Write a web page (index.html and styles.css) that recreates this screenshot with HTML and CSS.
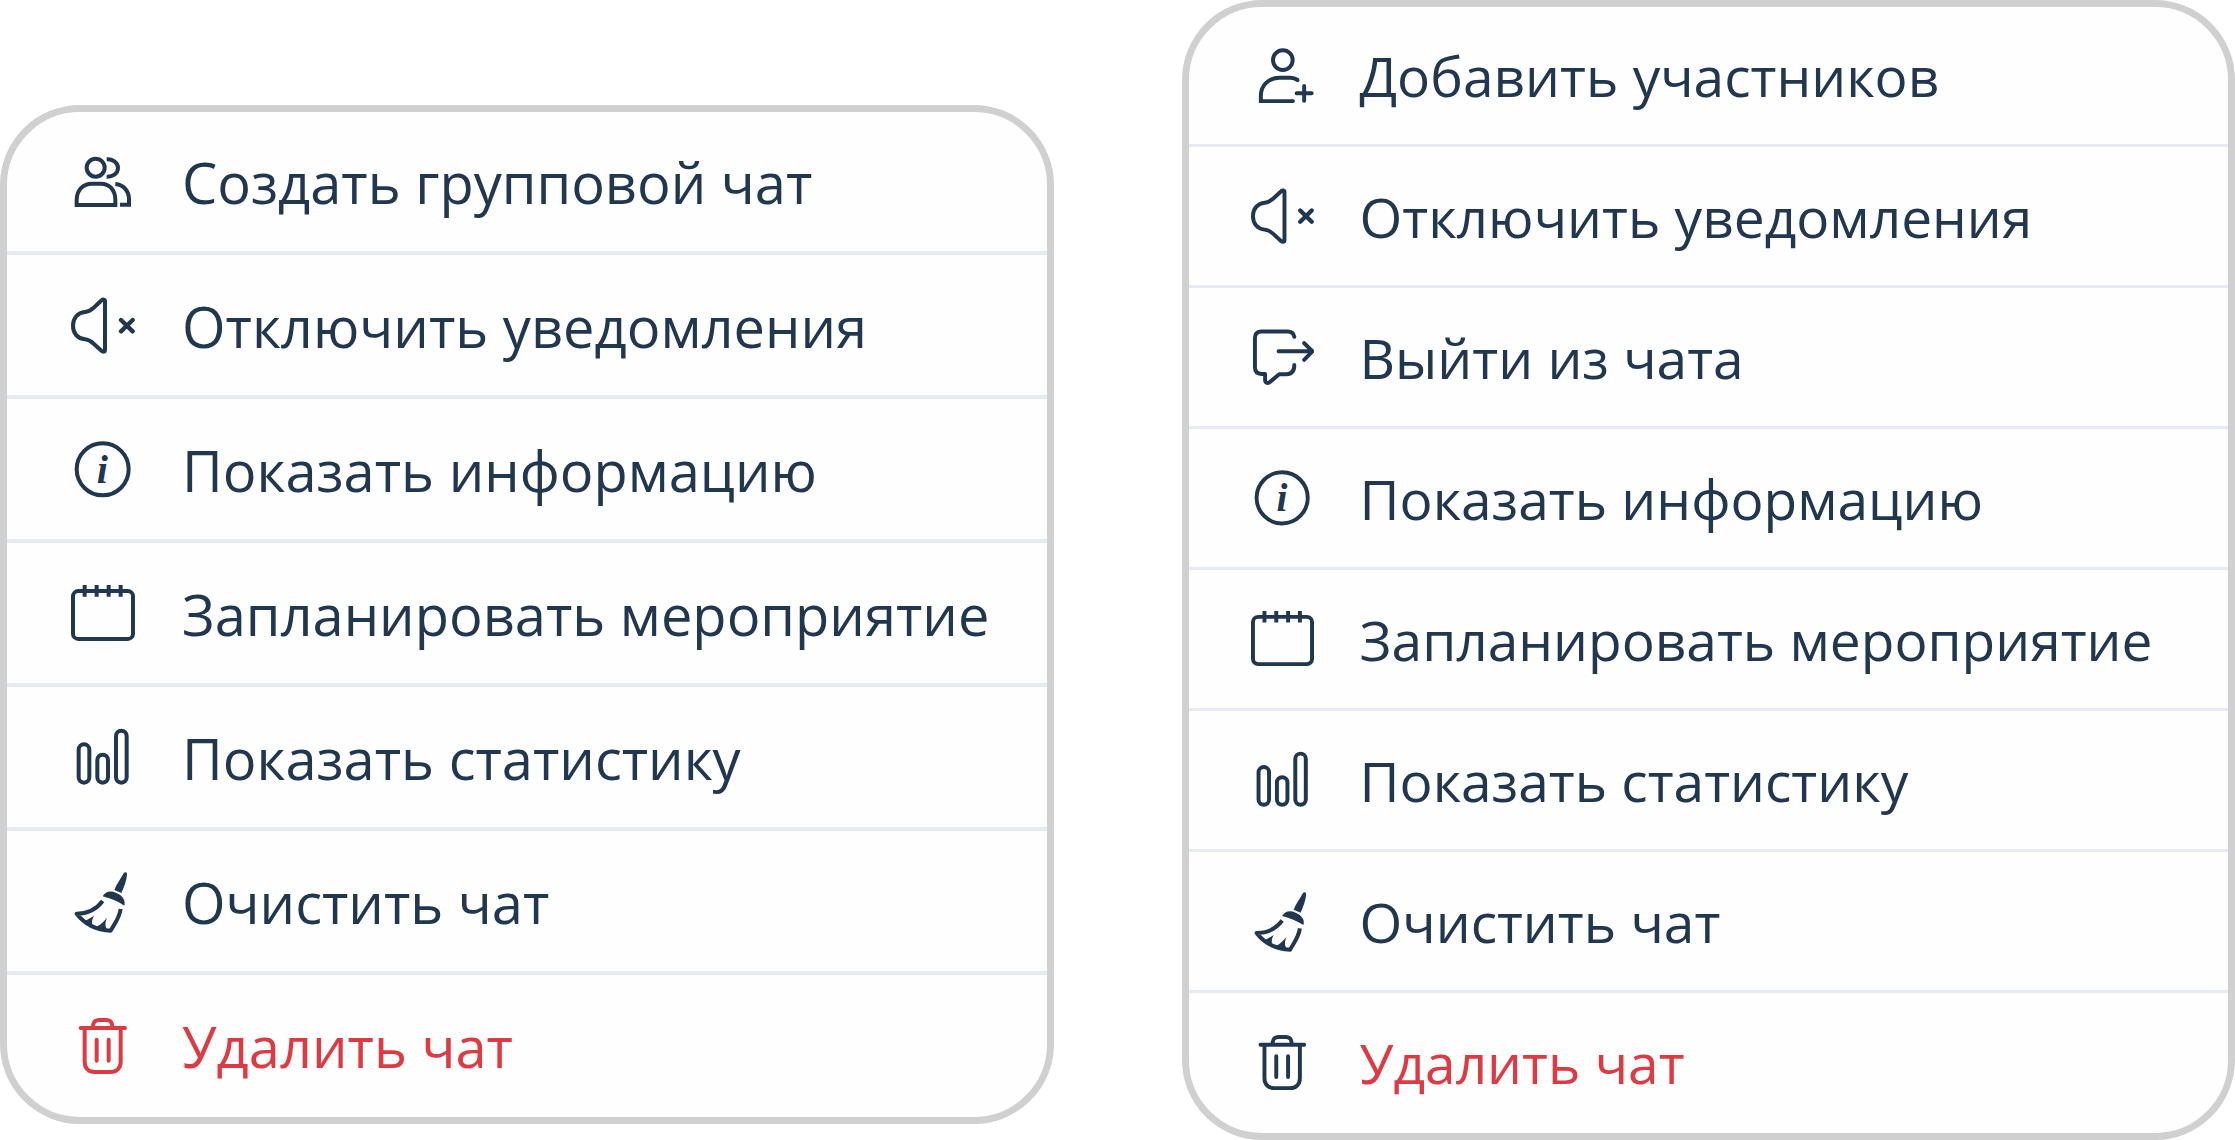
FILE: index.html
```html
<!DOCTYPE html>
<html lang="ru">
<head>
<meta charset="utf-8">
<meta name="viewport" content="width=device-width, initial-scale=1">
<title>Меню чата</title>
<link rel="stylesheet" href="styles.css">
</head>
<body>
<svg class="sprite" aria-hidden="true">
  <symbol id="i-group" viewBox="0 0 192 192">
    <circle cx="74" cy="53" r="27"/>
    <path d="M107 28C124 27 141 37 141 54S124 81 107 80"/>
    <path d="M17 165V150C17 118 38 101 62 101H90C114 101 133 118 133 150V165Z"/>
    <path d="M133 102C158 104 174 124 174 148V164H147"/>
  </symbol>
  <symbol id="i-mute" viewBox="0 0 192 192">
    <path d="M102 22V168C102 174 96 174 92 171L68 149C60 142 54 137 42 136C20 134 6 118 6 95C6 72 20 56 42 54C54 53 60 48 68 41L92 19C96 15 102 16 102 22Z"/>
    <path stroke-linecap="round" stroke-width="13" d="M150 78L185 112M185 78L150 112"/>
  </symbol>
  <symbol id="i-info" viewBox="0 0 192 192">
    <circle cx="95" cy="94" r="78"/>
    <text class="info-letter" x="94" y="135" text-anchor="middle">i</text>
  </symbol>
  <symbol id="i-calendar" viewBox="0 0 192 192">
    <rect x="6" y="27" width="180" height="144" rx="16"/>
    <path d="M41 9V44M77 9V44M113 9V44M149 9V44"/>
  </symbol>
  <symbol id="i-stats" viewBox="0 0 192 192">
    <rect x="23" y="55" width="32" height="115" rx="16"/>
    <rect x="79" y="86" width="32" height="84" rx="16"/>
    <rect x="135" y="14" width="32" height="156" rx="16"/>
  </symbol>
  <symbol id="i-broom" viewBox="0 0 192 192">
    <path class="solid" d="M158 10C161 5 169 6 168 13C167 31 160 50 151 69L130 60C138 40 149 27 158 10Z"/>
    <path class="solid" d="M95 79C103 64 119 61 136 69C153 76 165 89 160 107C140 94 119 85 95 79Z"/>
    <path d="M95 93C78 116 50 131 17 131C40 161 76 180 119 182C129 163 145 146 149 117" stroke-linejoin="round"/>
    <path class="solid" d="M42 153L70 137C65 144 62 150 64 164ZM76 170C90 164 98 154 108 143C103 157 101 166 108 178Z"/>
  </symbol>
  <symbol id="i-trash" viewBox="0 0 192 192">
    <path d="M41 44V143C41 163 53 174 72 174H118C137 174 149 163 149 143V44M66 42C65 26 71 18 85 18H105C119 18 125 26 124 42"/>
    <path stroke-linecap="round" d="M29 42H162M77 77V140M113 77V140"/>
  </symbol>
  <symbol id="i-add-user" viewBox="0 0 192 192">
    <circle cx="97" cy="49" r="30"/>
    <path d="M128 174H30V158C30 124 56 103 86 103H120C130 103 137 106 142 110"/>
    <path stroke-linecap="round" d="M128 174H127M141 109L142 110M162 128V173M139 150H185"/>
  </symbol>
  <symbol id="i-leave" viewBox="0 0 192 192">
    <path stroke-linecap="round" stroke-linejoin="round" d="M132 33C130 22 124 17 112 17H32Q12 17 12 37V126Q12 146 32 146H43V164C43 174 50 176 57 171L86 147H108Q132 147 132 119"/>
    <path stroke-linecap="round" stroke-linejoin="round" d="M84 77H186M162 52L187 77L162 103"/>
  </symbol>
</svg>

<main class="menus">
  <ul class="menu menu-personal">
    <li><button type="button" class="item"><svg class="icon" aria-hidden="true"><use href="#i-group"/></svg>Создать групповой чат</button></li>
    <li><button type="button" class="item"><svg class="icon" aria-hidden="true"><use href="#i-mute"/></svg>Отключить уведомления</button></li>
    <li><button type="button" class="item"><svg class="icon" aria-hidden="true"><use href="#i-info"/></svg>Показать информацию</button></li>
    <li><button type="button" class="item"><svg class="icon" aria-hidden="true"><use href="#i-calendar"/></svg>Запланировать мероприятие</button></li>
    <li><button type="button" class="item"><svg class="icon" aria-hidden="true"><use href="#i-stats"/></svg>Показать статистику</button></li>
    <li><button type="button" class="item"><svg class="icon" aria-hidden="true"><use href="#i-broom"/></svg>Очистить чат</button></li>
    <li><button type="button" class="item danger"><svg class="icon icon-danger" aria-hidden="true"><use href="#i-trash"/></svg>Удалить чат</button></li>
  </ul>

  <ul class="menu menu-group">
    <li><button type="button" class="item"><svg class="icon" aria-hidden="true"><use href="#i-add-user"/></svg>Добавить участников</button></li>
    <li><button type="button" class="item"><svg class="icon" aria-hidden="true"><use href="#i-mute"/></svg>Отключить уведомления</button></li>
    <li><button type="button" class="item"><svg class="icon" aria-hidden="true"><use href="#i-leave"/></svg>Выйти из чата</button></li>
    <li><button type="button" class="item"><svg class="icon" aria-hidden="true"><use href="#i-info"/></svg>Показать информацию</button></li>
    <li><button type="button" class="item"><svg class="icon" aria-hidden="true"><use href="#i-calendar"/></svg>Запланировать мероприятие</button></li>
    <li><button type="button" class="item"><svg class="icon" aria-hidden="true"><use href="#i-stats"/></svg>Показать статистику</button></li>
    <li><button type="button" class="item"><svg class="icon" aria-hidden="true"><use href="#i-broom"/></svg>Очистить чат</button></li>
    <li><button type="button" class="item danger"><svg class="icon" aria-hidden="true"><use href="#i-trash"/></svg>Удалить чат</button></li>
  </ul>
</main>
</body>
</html>
```

FILE: styles.css
```css
* {
  box-sizing: border-box;
}

body {
  margin: 0;
  background: #fff;
  color: #20374f;
  font-family: "Open Sans", "Noto Sans", sans-serif;
}

.sprite {
  display: none;
}

.menus {
  display: grid;
  grid-template-columns: 1fr 1fr;
  column-gap: 128px;
  align-items: start;
}

.menu {
  margin: 0;
  padding: 0;
  list-style: none;
  background: #fefefe;
  border: 7px solid #d0d0d0;
  border-radius: 80px;
  overflow: hidden;
}

.menu-personal {
  margin-top: 105px;
}

.item {
  display: flex;
  align-items: center;
  width: 100%;
  margin: 0;
  border: 0;
  border-bottom: 3px solid #e4ebf4;
  background: none;
  color: inherit;
  font-family: inherit;
  font-weight: 400;
  text-align: left;
  white-space: nowrap;
  cursor: pointer;
}

.menu-personal .item {
  gap: 47px;
  padding: 33px 32px 31px 64px;
  border-bottom-width: 4px;
  font-size: 56px;
  line-height: 76px;
}

.menu-personal li:first-child .item {
  padding-top: 32px;
}

.menu-group .item {
  gap: 46px;
  padding: 32px 32px 31px 62px;
  font-size: 55px;
  line-height: 75px;
}

.menu-group li:first-child .item {
  padding-top: 31px;
}

.menu li:last-child .item {
  padding-bottom: 33px;
  border-bottom: 0;
}

.menu .danger {
  color: #dd3b44;
}

.icon {
  flex: none;
  width: 64px;
  height: 64px;
  fill: none;
  stroke: #20374f;
  stroke-width: 12;
  color: #20374f;
}

.menu-group .icon {
  width: 63px;
  height: 63px;
}

.icon-danger {
  stroke: #dd3b44;
}

.solid {
  fill: currentColor;
  stroke: none;
}

.info-letter {
  fill: currentColor;
  stroke: none;
  font-family: "Liberation Serif", serif;
  font-size: 120px;
  font-style: italic;
  font-weight: 700;
}
```
